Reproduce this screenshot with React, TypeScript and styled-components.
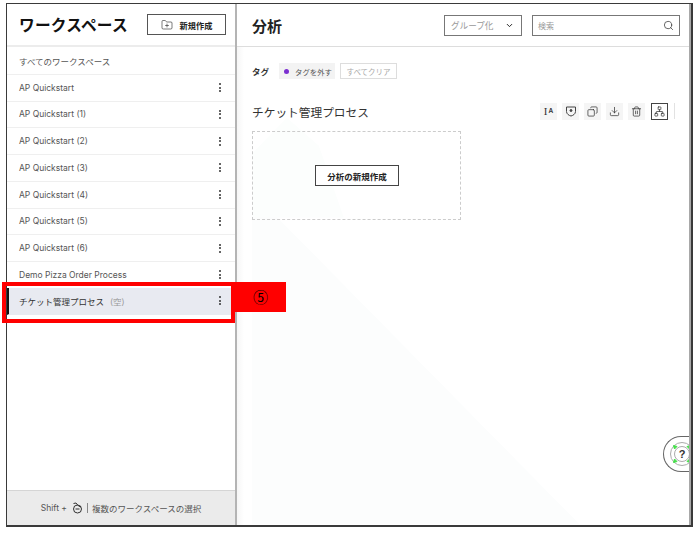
import React from "react";
import styled, { createGlobalStyle } from "styled-components";
import { ChevronDown, Copy, Download, FolderPlus, Network, Search, Trash2 } from "lucide-react";

const FONT = `Inter, "Noto Sans CJK JP", sans-serif`;

const Global = createGlobalStyle`
  html, body { margin: 0; padding: 0; background: #fff; }
  body { font-family: ${FONT}; width: 700px; height: 536px; overflow: hidden; }
`;

const Frame = styled.div`
  position: relative;
  box-sizing: border-box;
  display: flex;
  width: 687px;
  height: 524px;
  margin: 3px 0 0 6px;
  border: 1px solid #3a3a3a;
  border-width: 1.5px 2px 2px 1.5px;
  background: #fff;
`;

const Sidebar = styled.aside`
  box-sizing: border-box;
  flex: 0 0 230px;
  display: flex;
  flex-direction: column;
  border-right: 2px solid #b4b4b4;
`;

const SideHeader = styled.header`
  box-sizing: border-box;
  height: 43px;
  display: flex;
  align-items: center;
  justify-content: space-between;
  padding: 0 9px 0 12px;
  border-bottom: 2px solid #ececec;
`;

const SideTitle = styled.h1`
  margin: 0;
  font-size: 15.7px;
  font-weight: 700;
  color: #111;
  letter-spacing: 0.2px;
`;

const NewButton = styled.button`
  box-sizing: border-box;
  width: 79px;
  height: 21px;
  display: flex;
  align-items: center;
  justify-content: center;
  gap: 7px;
  padding: 0;
  background: #fff;
  border: 1px solid #555;
  font: 700 8.2px ${FONT};
  color: #222;
`;

const List = styled.div`
  flex: 1;
  padding-top: 1px;
`;

const Row = styled.div<{ $selected?: boolean }>`
  box-sizing: border-box;
  height: 26.75px;
  display: flex;
  align-items: center;
  justify-content: space-between;
  padding: 0 14px 0 12px;
  border-bottom: 1px solid ${(p) => (p.$selected ? "transparent" : "#efefef")};
  font-size: 8.5px;
  color: #555;
  ${(p) =>
    p.$selected &&
    `
    margin-top: -1px;
    height: 27px;
    background: #e8eaf1;
    border-left: 2px solid #111;
    padding-left: 10px;
    color: #333;
  `}
`;

const Empty = styled.span`
  margin-left: 6px;
  font-size: 8.5px;
  color: #999;
`;

const RowLabel = styled.span`
  white-space: nowrap;
`;

const Dots = styled.span`
  display: flex;
  flex-direction: column;
  gap: 1.6px;
  i {
    display: block;
    width: 2px;
    height: 2px;
    border-radius: 50%;
    background: #333;
  }
`;

const SideFooter = styled.footer`
  box-sizing: border-box;
  height: 35px;
  display: flex;
  align-items: center;
  justify-content: center;
  gap: 4px;
  background: #ebebeb;
  border-top: 1px solid #d5d5d5;
  font-size: 8.5px;
  color: #555;
`;

const Pipe = styled.span`
  width: 1px;
  height: 10px;
  background: #888;
`;

const Main = styled.main`
  position: relative;
  flex: 1;
  min-width: 0;
  display: flex;
  flex-direction: column;
  overflow: hidden;
  border-right: 2px solid #a8a8a8;
  background: linear-gradient(90deg, #f6f6f6 0, #fff 7px);
`;

const Watermark = styled.svg`
  position: absolute;
  left: 0;
  top: 0;
  width: 100%;
  height: 100%;
`;

const MainHeader = styled.header`
  position: relative;
  box-sizing: border-box;
  height: 43px;
  flex: none;
  display: flex;
  align-items: center;
  padding: 0 9px 0 15px;
  border-bottom: 1px solid #ddd;
  background: #fff;
`;

const MainTitle = styled.h2`
  margin: 0 auto 0 0;
  font-size: 15px;
  font-weight: 700;
  color: #222;
`;

const Select = styled.div`
  box-sizing: border-box;
  width: 78px;
  height: 21px;
  display: flex;
  align-items: center;
  justify-content: space-between;
  padding: 0 7px 0 6px;
  margin-right: 10px;
  background: #fff;
  border: 1px solid #777;
  font-size: 8.6px;
  color: #999;
`;

const SearchBox = styled.div`
  box-sizing: border-box;
  width: 148px;
  height: 21px;
  display: flex;
  align-items: center;
  justify-content: space-between;
  padding: 0 5px;
  background: #fff;
  border: 1px solid #777;
  font-size: 8px;
  color: #999;
`;

const Body = styled.div`
  position: relative;
  padding: 16px 9px 0 15px;
`;

const TagRow = styled.div`
  display: flex;
  align-items: center;
  height: 16px;
`;

const TagLabel = styled.span`
  width: 27px;
  font-size: 8.5px;
  font-weight: 700;
  color: #333;
`;

const TagChip = styled.span`
  box-sizing: border-box;
  width: 56px;
  height: 16px;
  display: flex;
  align-items: center;
  gap: 6px;
  padding-left: 5px;
  margin-right: 5px;
  background: #f3f3f3;
  font-size: 7.4px;
  color: #555;
  i {
    width: 5px;
    height: 5px;
    border-radius: 50%;
    background: #7b2fd0;
  }
`;

const ClearChip = styled.span`
  box-sizing: border-box;
  width: 57px;
  height: 16px;
  display: flex;
  align-items: center;
  justify-content: center;
  background: #fff;
  border: 1px solid #ddd;
  font-size: 7.5px;
  color: #aaa;
`;

const SectionHead = styled.div`
  display: flex;
  align-items: center;
  justify-content: space-between;
  height: 18px;
  margin-top: 23px;
`;

const SectionTitle = styled.h3`
  margin: 0;
  font-size: 11.7px;
  font-weight: 400;
  color: #333;
`;

const Tools = styled.div`
  display: flex;
  align-items: center;
  gap: 5px;
  padding-right: 5px;
`;

const Tool = styled.span<{ $active?: boolean }>`
  box-sizing: border-box;
  width: 17px;
  height: 17px;
  display: flex;
  align-items: center;
  justify-content: center;
  margin-left: ${(p) => (p.$active ? "1px" : "0")};
  background: ${(p) => (p.$active ? "#fff" : "#f5f5f5")};
  border: ${(p) => (p.$active ? "1px solid #444" : "none")};
  color: #333;
`;

const CursorI = styled.span`
  font: 400 11px "Liberation Serif", serif;
`;

const SmallA = styled.span`
  font: 600 6.5px ${FONT};
  margin-left: 1px;
`;

const Flip = styled.span`
  display: flex;
  transform: scaleX(-1);
`;

const ToolEnd = styled.span`
  width: 1px;
  height: 16px;
  margin-left: 1px;
  background: #e2e2e2;
`;

const Card = styled.div`
  box-sizing: border-box;
  width: 209px;
  height: 89px;
  margin-top: 11px;
  display: flex;
  align-items: center;
  justify-content: center;
  border: 1px dashed #ccc;
`;

const CreateButton = styled.button`
  box-sizing: border-box;
  width: 84px;
  height: 21px;
  padding: 0;
  margin-left: 1px;
  background: #fff;
  border: 1px solid #444;
  font: 700 8.5px ${FONT};
  color: #222;
`;

const Help = styled.div`
  position: absolute;
  right: 0;
  top: 431.5px;
  box-sizing: border-box;
  width: 26px;
  height: 36px;
  border: 1px solid #666;
  border-right: none;
  border-radius: 18px 0 0 18px;
  background: #fff;
  overflow: hidden;
`;

const Callout = styled.div`
  position: absolute;
  left: -5px;
  top: 278px;
  box-sizing: border-box;
  width: 233px;
  height: 41px;
  border: 4px solid #f00;
`;

const CalloutTag = styled.div`
  position: absolute;
  left: 228px;
  top: 277.5px;
  width: 51px;
  height: 30px;
  display: flex;
  align-items: center;
  justify-content: center;
  background: #f00;
  font: 400 15px "Noto Sans CJK JP", sans-serif;
  color: #000;
`;

const rows = [
  "AP Quickstart",
  "AP Quickstart (1)",
  "AP Quickstart (2)",
  "AP Quickstart (3)",
  "AP Quickstart (4)",
  "AP Quickstart (5)",
  "AP Quickstart (6)",
  "Demo Pizza Order Process",
];

const More = () => (
  <Dots>
    <i />
    <i />
    <i />
  </Dots>
);

const GestureIcon = () => (
  <svg width="12" height="12" viewBox="0 0 12 12" fill="none" stroke="#333" strokeWidth="1">
    <circle cx="6.5" cy="7" r="4" />
    <path d="M2.5 1.5 L5 1 L7.5 4 L10 5" />
    <path d="M4.5 7 h4" />
  </svg>
);

const ShieldIcon = () => (
  <svg width="12" height="12" viewBox="0 0 12 12" fill="none" stroke="#444" strokeWidth="1">
    <path d="M1.5 2 H10.5 V6.5 C10.5 9 8 10.5 6 11 C4 10.5 1.5 9 1.5 6.5 Z" />
    <circle cx="6" cy="5.5" r="1" fill="#444" />
  </svg>
);

const HelpIcon = () => (
  <svg width="32" height="34" viewBox="0 0 32 34" fill="none">
    <circle cx="18" cy="17" r="11.5" stroke="#aaa" strokeWidth="1" />
    <circle cx="18" cy="17" r="7.5" stroke="#aaa" strokeWidth="1" />
    <path d="M9.5 8.5 L13 9.5 L10.5 12 Z M26.5 8.5 L23 9.5 L25.5 12 Z M9.5 25.5 L13 24.5 L10.5 22 Z M26.5 25.5 L23 24.5 L25.5 22 Z" fill="#45e04a" stroke="#45e04a" />
    <text x="18" y="21" textAnchor="middle" fontFamily="Liberation Sans, sans-serif" fontWeight="700" fontSize="11" fill="#333">?</text>
  </svg>
);

export default function App() {
  return (
    <>
      <Global />
      <Frame>
        <Sidebar>
          <SideHeader>
            <SideTitle>ワークスペース</SideTitle>
            <NewButton>
              <FolderPlus size={12} strokeWidth={1.2} />
              新規作成
            </NewButton>
          </SideHeader>
          <List>
            <Row>
              <RowLabel>すべてのワークスペース</RowLabel>
            </Row>
            {rows.map((r) => (
              <Row key={r}>
                <RowLabel>{r}</RowLabel>
                <More />
              </Row>
            ))}
            <Row $selected>
              <RowLabel>
                チケット管理プロセス<Empty>(空)</Empty>
              </RowLabel>
              <More />
            </Row>
          </List>
          <SideFooter>
            Shift +
            <GestureIcon />
            <Pipe />
            複数のワークスペースの選択
          </SideFooter>
        </Sidebar>
        <Main>
          <Watermark viewBox="0 0 453 522" preserveAspectRatio="none">
            <polygon points="15,188 343,521 15,521" fill="#fcfdfd" />
            <polygon points="15,150 50,114 82,142 107,214 15,214" fill="#fcfefd" />
          </Watermark>
          <MainHeader>
            <MainTitle>分析</MainTitle>
            <Select>
              グループ化
              <ChevronDown size={9} color="#222" strokeWidth={2.6} />
            </Select>
            <SearchBox>
              検索
              <Search size={11} color="#333" strokeWidth={1.6} />
            </SearchBox>
          </MainHeader>
          <Body>
            <TagRow>
              <TagLabel>タグ</TagLabel>
              <TagChip>
                <i />
                タグを外す
              </TagChip>
              <ClearChip>すべてクリア</ClearChip>
            </TagRow>
            <SectionHead>
              <SectionTitle>チケット管理プロセス</SectionTitle>
              <Tools>
                <Tool>
                  <CursorI>I</CursorI>
                  <SmallA>A</SmallA>
                </Tool>
                <Tool>
                  <ShieldIcon />
                </Tool>
                <Tool>
                  <Flip>
                    <Copy size={11} strokeWidth={1.6} />
                  </Flip>
                </Tool>
                <Tool>
                  <Download size={11} strokeWidth={1.6} />
                </Tool>
                <Tool>
                  <Trash2 size={11} strokeWidth={1.6} />
                </Tool>
                <Tool $active>
                  <Network size={11} strokeWidth={1.6} />
                </Tool>
                <ToolEnd />
              </Tools>
            </SectionHead>
            <Card>
              <CreateButton>分析の新規作成</CreateButton>
            </Card>
          </Body>
          <Help>
            <HelpIcon />
          </Help>
        </Main>
        <Callout />
        <CalloutTag>⑤</CalloutTag>
      </Frame>
    </>
  );
}
